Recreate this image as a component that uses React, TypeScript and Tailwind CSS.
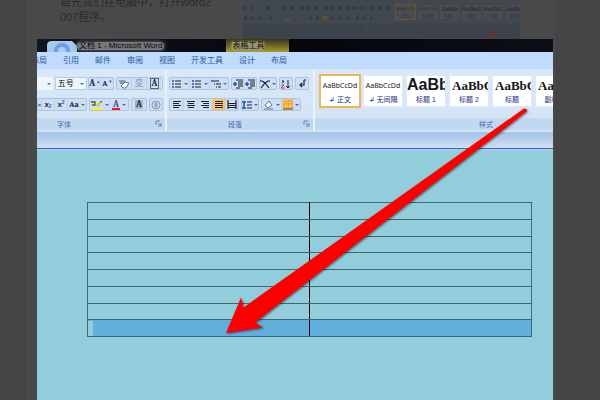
import React from 'react';

const tabs = [
  { id: 'layout', text: '布局' },
  { id: 'references', text: '引用' },
  { id: 'mailings', text: '邮件' },
  { id: 'review', text: '审阅' },
  { id: 'view', text: '视图' },
  { id: 'developer', text: '开发工具' },
  { id: 'table-design', text: '设计' },
  { id: 'table-layout', text: '布局' },
];

const plain = "text-[7px] font-['Noto_Sans',sans-serif]";
const serif = "pl-0.5 text-[13px] font-bold font-['Liberation_Serif',serif] self-start";

const styles = [
  { sample: 'AaBbCcDd', name: '正文', mark: true, look: plain, active: true },
  { sample: 'AaBbCcDd', name: '无间隔', mark: true, look: plain, active: false },
  { sample: 'AaBb', name: '标题 1', mark: false, look: "text-base font-bold font-['Liberation_Sans',sans-serif] self-start", active: false },
  { sample: 'AaBbC', name: '标题 2', mark: false, look: serif, active: false },
  { sample: 'AaBbC', name: '标题', mark: false, look: serif, active: false },
  { sample: 'AaBbC', name: '副标题', mark: false, look: serif, active: false },
];

function Caret() {
  return (
    <svg className="w-1 h-1 shrink-0" viewBox="0 0 4 4" aria-hidden="true">
      <path d="M0 1h4L2 3z" fill="#4a6da7" />
    </svg>
  );
}

type ToolProps = { label: string; caret?: boolean; active?: boolean; width?: string; children: React.ReactNode };

function Tool({ label, caret, active, width = 'w-4', children }: ToolProps) {
  return (
    <button
      type="button"
      aria-label={label}
      className={`h-full shrink-0 flex items-center justify-center gap-0.5 leading-none ${width} ${active ? 'bg-[#fbc46a]' : ''}`}
    >
      {children}
      {caret && <Caret />}
    </button>
  );
}

function ToolBox({ children }: { children: React.ReactNode }) {
  return (
    <div className="h-[13px] flex shrink-0 rounded-xs border border-[#abc4e4] bg-[#cddff4] divide-x divide-[#bdd2ec] text-[#1c2430]">
      {children}
    </div>
  );
}

function Lines({ d, dots }: { d: string; dots?: string }) {
  return (
    <svg className="w-2.5 h-2.5 shrink-0" viewBox="0 0 10 10" fill="none" aria-hidden="true">
      <path d={d} stroke="#1d2228" strokeWidth="1.2" />
      {dots && <path d={dots} stroke="#2b58a8" strokeWidth="1.6" />}
    </svg>
  );
}

function GroupLabel({ children, launcher, pad = '' }: { children: React.ReactNode; launcher?: boolean; pad?: string }) {
  return (
    <div className="h-3 pr-0.5 flex items-center bg-[#c1d8f0] text-[7px] leading-none text-[#3f6bb0]">
      <span className={`flex-1 text-center ${pad}`}>{children}</span>
      {launcher && (
        <svg className="w-2 h-2" viewBox="0 0 8 8" fill="none" aria-hidden="true">
          <path d="M1 5V1h4M3 3l3 3M6 3v3H3" stroke="#5d82b8" />
        </svg>
      )}
    </div>
  );
}

function TitleBar() {
  return (
    <header className="h-[13px] flex items-center overflow-hidden bg-linear-to-r from-[#10161b] via-[#05070c] to-[#0b0f16] text-[8px] leading-none">
      <svg className="ml-2.5 w-[30px] h-[13px] shrink-0" viewBox="0 0 30 13" aria-hidden="true">
        <path d="M0 13V6q0-4 5-4h20l5 5v6z" fill="#a5c9f1" />
        <circle cx="15" cy="12" r="8" fill="#6f9fdc" />
        <circle cx="15" cy="12" r="4" fill="#a9cdf6" />
      </svg>
      <h1 className="px-0.5 rounded-full bg-[#75777a] shadow-[0_0_4px_#808386] text-[#050608] whitespace-nowrap">
        文档 1 - Microsoft Word
      </h1>
      <div className="ml-[62px] w-[63px] h-full pl-1.5 shrink-0 flex items-center bg-linear-to-b from-[#39351d] to-[#a79a25]">
        <span className="bg-[#98946f] shadow-[0_0_3px_#a9a67f] text-[#14130a]">表格工具</span>
      </div>
    </header>
  );
}

function FontGroup() {
  return (
    <section className="w-[130px] shrink-0 flex flex-col border-r-2 border-[#eaf3fc]">
      <div className="h-12 pt-[7px] pr-0.5 flex flex-col gap-2">
        <div className="flex items-center justify-between">
          <div className="h-[13px] w-4 flex items-center justify-end pr-0.5 bg-[#eef5fd]"><Caret /></div>
          <button type="button" className="h-[13px] w-8 px-0.5 flex items-center justify-between bg-[#eef5fd] border border-[#b5cdea] text-[8px] leading-none text-black">
            五号
            <Caret />
          </button>
          <ToolBox>
            <Tool label="增大字体" width="w-3"><b className="font-serif text-[9px]">A</b><sup className="text-[5px] text-[#3565b5]">▴</sup></Tool>
            <Tool label="缩小字体" width="w-3"><b className="font-serif text-[8px]">A</b><sup className="text-[5px] text-[#3565b5]">▾</sup></Tool>
          </ToolBox>
          <ToolBox>
            <Tool label="清除格式" width="w-[15px]">
              <svg className="w-2.5 h-2.5" viewBox="0 0 10 10" aria-hidden="true">
                <path d="M2 7l4-4 4 1-3 5H4z" fill="#f7f9fc" stroke="#6b7789" />
                <path d="M0 2h4M1 4h3M5 1v3" stroke="#46556c" />
              </svg>
            </Tool>
            <Tool label="拼音指南" width="w-[15px]"><span className="text-[9px] text-[#8496b4]">变</span></Tool>
            <Tool label="字符边框" width="w-[15px]"><b className="px-px font-serif text-[9px] leading-[9px] border border-[#59677c]">A</b></Tool>
          </ToolBox>
        </div>
        <div className="flex items-center justify-between">
          <ToolBox>
            <Tool label="删除线" width="w-1"><span className="text-[6px]">×</span></Tool>
            <Tool label="下标" width="w-[13px]"><b className="text-[8px]">x<sub className="text-[5px] text-[#3565b5]">2</sub></b></Tool>
            <Tool label="上标" width="w-[13px]"><b className="text-[8px]">x<sup className="text-[5px] text-[#3565b5]">2</sup></b></Tool>
            <Tool label="更改大小写" caret width="w-[18px]"><b className="text-[8px] font-serif">Aa</b></Tool>
          </ToolBox>
          <ToolBox>
            <Tool label="突出显示" caret width="w-5">
              <svg className="w-3 h-2.5" viewBox="0 0 12 10" aria-hidden="true">
                <path d="M1 8h10v2H1z" fill="#fff200" />
                <path d="M0 2h4v3H1M6 6l5-5" stroke="#5c5830" strokeWidth="1.3" fill="none" />
                <path d="M5 6l4-4 2 1-4 4z" fill="#d9c94d" />
              </svg>
            </Tool>
            <Tool label="字体颜色" caret width="w-[18px]"><b className="px-px font-serif text-[9px] leading-[8px] text-[#304c83] border-b-2 border-[#ff1010]">A</b></Tool>
          </ToolBox>
          <ToolBox>
            <Tool label="字符底纹" width="w-[14px]"><b className="font-serif text-[9px] px-px bg-[#a9b2bf]">A</b></Tool>
          </ToolBox>
          <ToolBox>
            <Tool label="带圈字符" width="w-3">
              <svg className="w-2.5 h-2.5" viewBox="0 0 10 10" fill="none" stroke="#8796ad" aria-hidden="true">
                <circle cx="5" cy="5" r="4" />
                <path d="M5 2v6M3 4h4M3 6h4" />
              </svg>
            </Tool>
          </ToolBox>
        </div>
      </div>
      <GroupLabel launcher pad="pr-16">字体</GroupLabel>
    </section>
  );
}

function ParagraphGroup() {
  return (
    <section className="w-[148px] shrink-0 flex flex-col border-r-2 border-[#eaf3fc]">
      <div className="h-12 pt-[7px] pl-0.5 flex flex-col gap-2">
        <div className="flex items-center gap-0.5">
          <ToolBox>
            <Tool label="项目符号" caret width="w-5"><Lines d="M3 2h6M3 5h6M3 8h6" dots="M0 2h2M0 5h2M0 8h2" /></Tool>
            <Tool label="编号" caret width="w-5"><Lines d="M3 2h6M3 5h6M3 8h6" dots="M1 1v2M1 4v2M1 7v2" /></Tool>
            <Tool label="多级列表" caret width="w-[18px]"><Lines d="M2 2h6M5 5h5M7 8h3" dots="M0 2h2M3 5h1M5 8h1" /></Tool>
          </ToolBox>
          <ToolBox>
            <Tool label="减少缩进" width="w-3"><Lines d="M3 1h7M5 3h5M5 5h5M5 7h5M3 9h4" dots="M0 5h4M2 3v4" /></Tool>
            <Tool label="增加缩进" width="w-3"><Lines d="M3 1h7M5 3h5M5 5h5M5 7h5M3 9h4" dots="M0 5h4M2 3v4" /></Tool>
          </ToolBox>
          <ToolBox>
            <Tool label="中文版式" caret width="w-4"><Lines d="M1 9l4-5 4 5M2 2l3 2 3-2" dots="M0 2h2M8 2h2" /></Tool>
          </ToolBox>
          <ToolBox>
            <Tool label="排序" width="w-3">
              <svg className="w-2.5 h-2.5" viewBox="0 0 10 10" fill="none" aria-hidden="true">
                <path d="M1 4l1-3 1 3" stroke="#2f5fb3" />
                <path d="M0 6h3L0 9h4" stroke="#b04050" />
                <path d="M7 1v8M5 7l2 2 2-2" stroke="#222" />
              </svg>
            </Tool>
          </ToolBox>
          <ToolBox>
            <Tool label="显示标记" width="w-3"><Lines d="M7 1v5H3M5 4L3 6l2 2M7 1h2" /></Tool>
          </ToolBox>
        </div>
        <div className="flex items-center gap-0.5">
          <ToolBox>
            <Tool label="左对齐" width="w-[14px]"><Lines d="M1 1.500h8M1 3.500h6M1 5.500h8M1 7.500h6" /></Tool>
            <Tool label="居中" width="w-[14px]"><Lines d="M1 1.500h8M2 3.500h6M1 5.500h8M2 7.500h6" /></Tool>
            <Tool label="右对齐" width="w-[14px]"><Lines d="M1 1.500h8M3 3.500h6M1 5.500h8M3 7.500h6" /></Tool>
            <Tool label="两端对齐" active width="w-[14px]"><Lines d="M1 1.500h8M1 3.500h8M1 5.500h8M1 7.500h8" /></Tool>
            <Tool label="分散对齐" width="w-3"><Lines d="M1 0v9M9 0v9M1 3.500h8M1 5.500h8M1 7.500h8" /></Tool>
          </ToolBox>
          <ToolBox>
            <Tool label="行距" caret width="w-4"><Lines d="M5 2h5M5 5h5M5 8h5" dots="M2 1v8M0 2h4M0 8h4" /></Tool>
          </ToolBox>
          <ToolBox>
            <Tool label="底纹" caret width="w-5">
              <svg className="w-2.5 h-2.5" viewBox="0 0 10 10" aria-hidden="true">
                <path d="M1 5l4-4 3 4-4 3z" fill="#f4f7fb" stroke="#68758a" />
                <path d="M0 9h9" stroke="#9ba9bd" strokeWidth="2" />
              </svg>
            </Tool>
            <Tool label="边框" active width="w-3">
              <svg className="w-2.5 h-2.5" viewBox="0 0 10 10" fill="none" stroke="#d17a14" aria-hidden="true">
                <path d="M1 1h8v7H1zM5 1v7M1 4h8" strokeDasharray="1 1" />
                <path d="M0 9h10" stroke="#6e4a1b" />
              </svg>
            </Tool>
            <Tool label="边框选项" width="w-1.5"><Caret /></Tool>
          </ToolBox>
        </div>
      </div>
      <GroupLabel launcher>段落</GroupLabel>
    </section>
  );
}

function StylesGroup() {
  return (
    <section className="flex-1 min-w-0 flex flex-col overflow-hidden">
      <div className="h-12 pt-1 pl-1 flex gap-px">
        {styles.map((s) => (
          <button
            key={s.name}
            type="button"
            className={`w-[42px] h-[34px] shrink-0 overflow-hidden border-2 flex flex-col items-center justify-between bg-white ${s.active ? 'border-[#edb65a]' : 'border-[#d8e9fb]'}`}
          >
            <span className={`h-[18px] flex items-center leading-none text-[#15181d] ${s.look}`}>{s.sample}</span>
            <span className="h-3 text-[7px] leading-3 text-[#242c88] whitespace-nowrap">{s.mark && '↲ '}{s.name}</span>
          </button>
        ))}
      </div>
      <GroupLabel pad="pl-[106px]">样式</GroupLabel>
    </section>
  );
}

function DocumentTable() {
  return (
    <table className="w-full h-[135px] table-fixed border-collapse leading-none">
      <tbody>
        {[0, 1, 2, 3, 4, 5, 6, 7].map((row) => (
          <tr key={row} className={row === 7 ? 'h-4 bg-[#62aedc]' : 'h-4'}>
            <td className="p-0 border border-[#46666f] border-r-black">
              {row === 7 && <div className="w-[5px] h-[15px] bg-[#92cddc]" />}
            </td>
            <td className="p-0 border border-[#46666f] border-l-black" />
          </tr>
        ))}
      </tbody>
    </table>
  );
}

function Arrow() {
  return (
    <svg className="absolute left-0 top-0 w-[516px] h-[361px] pointer-events-none drop-shadow-[1px_1px_1px_#00000088]" viewBox="0 0 516 361" aria-hidden="true">
      <path d="M189 294L204 258.500L206.500 268.500L487 69.500Q490 69 490 72L218 283.500L226 288.500Z" fill="#ff0000" />
    </svg>
  );
}

/* Small picture inside the dimmed article */
function Thumbnail() {
  return (
    <figure className="w-[277px] shrink-0 flex flex-col bg-[#424850] text-[4px] leading-none text-[#2c2f33]">
      <div className="h-[23px] flex">
        <svg className="w-[150px] h-[23px] shrink-0" viewBox="0 0 150 23" fill="none" aria-hidden="true">
          <path d="M0 8h10M23 8h7M40 8h12M57 8h20M81 8h25M109 8h15M128 8h20" stroke="#353b44" strokeWidth="3" strokeDasharray="4 3" />
          <path d="M1 18h20M26 18h7M66 18h25M96 18h10M113 18h16" stroke="#353b44" strokeWidth="3" strokeDasharray="3 4" />
          <path d="M41 20h5" stroke="#6a6628" />
          <path d="M51 20h5" stroke="#702d31" />
          <path d="M80 16h4v4h-4z" fill="#635124" />
        </svg>
        <div className="pt-1 pl-0.5 flex gap-px overflow-hidden">
          {styles.map((s) => (
            <div key={s.name} className={`w-[21px] h-4 pt-0.5 shrink-0 flex flex-col items-center gap-1 overflow-hidden border bg-[#4a4c4f] ${s.active ? 'border-[#66552f]' : 'border-[#42474d]'}`}>
              <span className={s.mark ? '' : 'text-[6px] leading-[4px] font-bold'}>{s.sample}</span>
              <span className="text-[#2b2e4d]">{s.name}</span>
            </div>
          ))}
        </div>
      </div>
      <div className="h-2 flex items-center bg-[#3e444b] text-[#2f3d52]">
        <span className="ml-6">字体</span>
        <span className="ml-20">段落</span>
        <span className="ml-28">样式</span>
      </div>
      <svg className="w-full flex-1" viewBox="0 0 277 12" preserveAspectRatio="none" aria-hidden="true">
        <path d="M0 0h277v12H0z" fill="#3d434d" />
        <path d="M244 9l11-9" stroke="#7c2d30" strokeWidth="3" />
      </svg>
    </figure>
  );
}

export default function App() {
  return (
    <div className="relative min-h-screen overflow-hidden flex flex-col bg-[#454545] font-['Liberation_Sans','Noto_Sans_CJK_SC',sans-serif]">
      {/* Dimmed article under the lightbox */}
      <article className="absolute inset-y-0 left-[25px] right-[43px] border-x border-[#414141] bg-[#494949]">
        <div className="h-[42px] pl-[34px] pr-9 flex justify-between overflow-hidden">
          <p className="w-[156px] shrink-0 -mt-[5px] text-[11px] leading-[15px] text-[#2b2b2b] break-all">
            首先我们在电脑中，打开word2007程序。
          </p>
          <Thumbnail />
        </div>
      </article>

      {/* Lightbox */}
      <main className="relative flex-1 ml-[37px] mr-[47px] mt-[39px] flex flex-col overflow-hidden bg-[#92cddc]">
        <TitleBar />
        <nav className="h-[17px] flex items-center overflow-hidden bg-[#bfdbff] text-[8px] leading-none text-[#2a5596]">
          <div className="-ml-3.5 flex">
            {tabs.map((tab) => (
              <a key={tab.id} href={`#${tab.id}`} className="px-2 shrink-0 whitespace-nowrap">{tab.text}</a>
            ))}
          </div>
        </nav>
        <div className="pt-px pb-0.5 flex border-b border-[#a9c4e4] bg-linear-to-b from-[#d9e8f9] to-[#d3e3f2]">
          <FontGroup />
          <ParagraphGroup />
          <StylesGroup />
        </div>
        <div className="h-4 bg-linear-to-b from-[#a6c3ea] to-[#cfdff5] border-b border-[#3b66c4]" />
        <div className="h-0.5 bg-[#a9cbe9]" />
        <div className="flex-1 pt-[51px] pl-[50px] pr-[21px]">
          <DocumentTable />
        </div>
        <Arrow />
      </main>
    </div>
  );
}
